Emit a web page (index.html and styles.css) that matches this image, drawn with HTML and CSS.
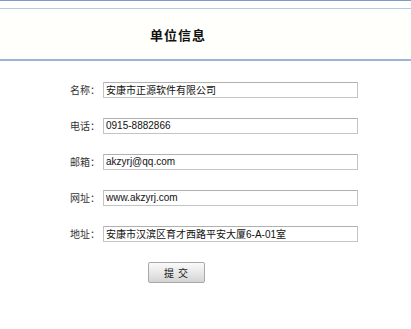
FILE: index.html
```html
<!DOCTYPE html>
<html lang="zh-CN">
<head>
  <meta charset="UTF-8">
  <title>单位信息</title>
  <link rel="stylesheet" href="styles.css">
</head>
<body>
  <div class="topline"></div>
  <div class="header">
    <h1 class="title">单位信息</h1>
  </div>

  <form class="info-form">
    <div class="row">
      <label class="label">名称：</label>
      <input class="field" type="text" value="安康市正源软件有限公司">
    </div>
    <div class="row">
      <label class="label">电话：</label>
      <input class="field" type="text" value="0915-8882866">
    </div>
    <div class="row">
      <label class="label">邮箱：</label>
      <input class="field" type="text" value="akzyrj@qq.com">
    </div>
    <div class="row">
      <label class="label">网址：</label>
      <input class="field" type="text" value="www.akzyrj.com">
    </div>
    <div class="row">
      <label class="label">地址：</label>
      <input class="field" type="text" value="安康市汉滨区育才西路平安大厦6-A-01室">
    </div>
    <div class="actions">
      <button class="submit" type="button">提 交</button>
    </div>
  </form>
</body>
</html>
```

FILE: styles.css
```css
body {
  margin: 0;
  background-color: #fff;
  font-family: "Liberation Sans", Arial, "Noto Sans CJK SC", sans-serif;
  color: #222;
}

/* top double rule */
.topline {
  height: 1px;
  background-color: #7f9cc6;
  margin-bottom: 7px;
}

.header {
  height: 50px;
  background-color: #fffffb;
  border-top: 1px solid #b7cbe3;
  border-bottom: 2px solid #9db5d4;
  display: flex;
  align-items: center;
  padding-left: 150px;
}

.title {
  margin: 0;
  font-size: 13px;
  font-weight: bold;
  letter-spacing: 1px;
  color: #111;
  font-family: "Noto Sans CJK SC", sans-serif;
}

.info-form {
  padding-top: 21px;
}

.row {
  display: flex;
  align-items: center;
  height: 15px;
  margin-bottom: 21px;
}

.label {
  width: 100px;
  padding-right: 3px;
  text-align: right;
  font-size: 10px;
  color: #333;
  font-family: "Noto Sans CJK SC", sans-serif;
}

.field {
  box-sizing: border-box;
  width: 255px;
  height: 16px;
  margin: 0;
  padding: 0 2px;
  border: 1px solid #c4c4c4;
  border-top-color: #b0b0b0;
  font-size: 10px;
  font-family: "Liberation Sans", Arial, "Noto Sans CJK SC", sans-serif;
  color: #111;
  background: #fff;
  outline: none;
}

.actions {
  padding-left: 148px;
}

.submit {
  width: 57px;
  height: 21px;
  padding: 0;
  border: 1px solid #a8a8a8;
  border-radius: 2px;
  background: linear-gradient(#fafafa, #e6e6e6 55%, #d4d4d4);
  font-size: 10px;
  letter-spacing: 1px;
  color: #222;
  font-family: "Noto Sans CJK SC", sans-serif;
  cursor: pointer;
}
```
